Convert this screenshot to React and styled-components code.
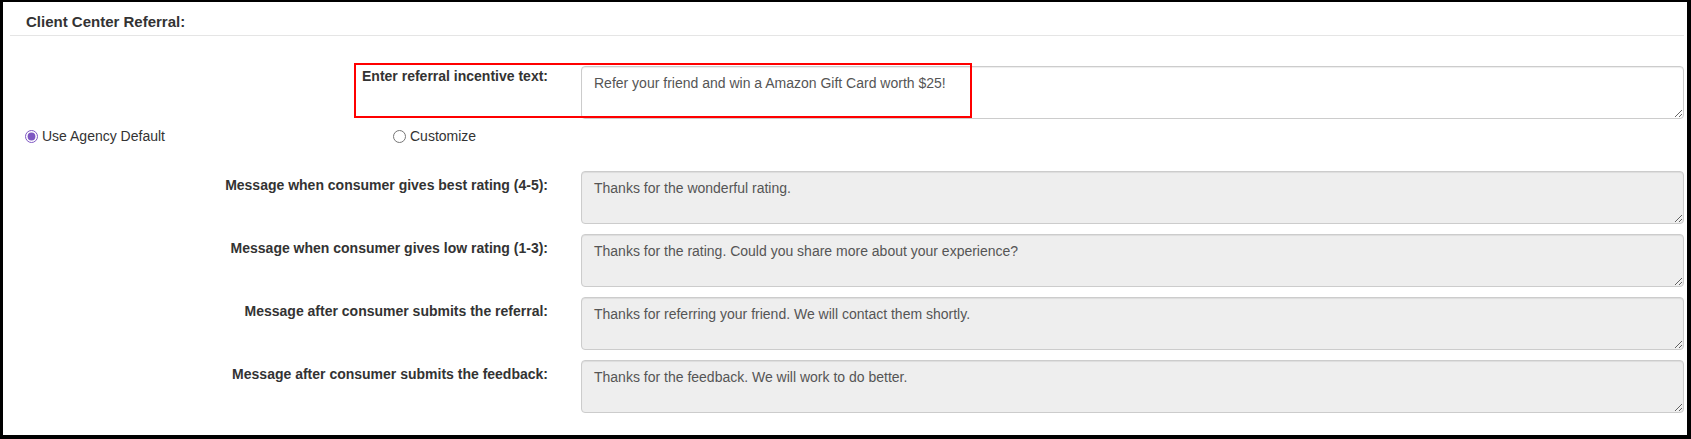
import React from 'react';
import styled, { createGlobalStyle } from 'styled-components';

const GlobalStyle = createGlobalStyle`
    html, body {
        margin: 0;
        padding: 0;
        background: #fff;
    }
    body {
        font-family: "Liberation Sans", Arial, Helvetica, sans-serif;
        font-size: 14px;
        color: #333;
    }
`

const Frame = styled.div`
    width: 1691px;
    height: 439px;
    box-sizing: border-box;
    border-style: solid;
    border-color: #000;
    border-width: 2px 4px 4px 3px;
    background: #fff;
`

const Header = styled.div`
    margin: 0 3px 0 7px;
    padding: 10px 0 3px 16px;
    border-bottom: 1px solid #e5e5e5;
`

const Title = styled.h5`
    margin: 0;
    font-size: 15px;
    line-height: 20px;
    font-weight: bold;
    color: #333;
`

const Form = styled.div`
    margin: 30px 3px 0 7px;
`

const Row = styled.div`
    position: relative;
    display: grid;
    grid-template-columns: 538px 1fr;
    column-gap: 33px;
    margin-top: ${p => p.$gap || 0}px;
`

const Label = styled.label`
    text-align: right;
    font-weight: bold;
    font-size: 14px;
    line-height: 20px;
    color: #333;
    padding-top: ${p => p.$pad || 0}px;
`

const TextBox = styled.textarea`
    display: block;
    box-sizing: border-box;
    width: 100%;
    height: 53px;
    margin: 0;
    padding: 6px 12px;
    font-family: "Liberation Sans", Arial, Helvetica, sans-serif;
    font-size: 14px;
    line-height: 20px;
    color: #555;
    background: ${p => (p.$muted ? '#eee' : '#fff')};
    border: 1px solid #ccc;
    border-radius: 4px;
    box-shadow: inset 0 1px 1px rgba(0, 0, 0, 0.075);
    outline: none;
    resize: vertical;
`

const Highlight = styled.div`
    position: absolute;
    left: 344px;
    top: -3px;
    width: 618px;
    height: 55px;
    box-sizing: border-box;
    border: 2px solid #f00;
    pointer-events: none;
`

const RadioRow = styled.div`
    display: grid;
    grid-template-columns: 368px auto;
    justify-content: start;
    margin: 7px 0 25px 15px;
`

const RadioLabel = styled.label`
    display: flex;
    align-items: center;
    gap: 4px;
    font-size: 14px;
    line-height: 20px;
    color: #333;
`

const Radio = styled.input`
    width: 13px;
    height: 13px;
    margin: 0;
    accent-color: #7e57c2;
`

const messages = [
    ['Message when consumer gives best rating (4-5):', 'Thanks for the wonderful rating.'],
    ['Message when consumer gives low rating (1-3):', 'Thanks for the rating. Could you share more about your experience?'],
    ['Message after consumer submits the referral:', 'Thanks for referring your friend. We will contact them shortly.'],
    ['Message after consumer submits the feedback:', 'Thanks for the feedback. We will work to do better.'],
]

function App() {
    return (
        <>
            <GlobalStyle />
            <Frame>
                <Header>
                    <Title>Client Center Referral:</Title>
                </Header>
                <Form>
                    <Row>
                        <Label>Enter referral incentive text:</Label>
                        <TextBox defaultValue="Refer your friend and win a Amazon Gift Card worth $25!" />
                        <Highlight />
                    </Row>
                    <RadioRow>
                        <RadioLabel>
                            <Radio type="radio" name="mode" defaultChecked />
                            Use Agency Default
                        </RadioLabel>
                        <RadioLabel>
                            <Radio type="radio" name="mode" />
                            Customize
                        </RadioLabel>
                    </RadioRow>
                    {messages.map(([label, text], i) => (
                        <Row key={label} $gap={i === 0 ? 0 : 10}>
                            <Label $pad={4}>{label}</Label>
                            <TextBox $muted readOnly defaultValue={text} />
                        </Row>
                    ))}
                </Form>
            </Frame>
        </>
    )
}

export default App;
